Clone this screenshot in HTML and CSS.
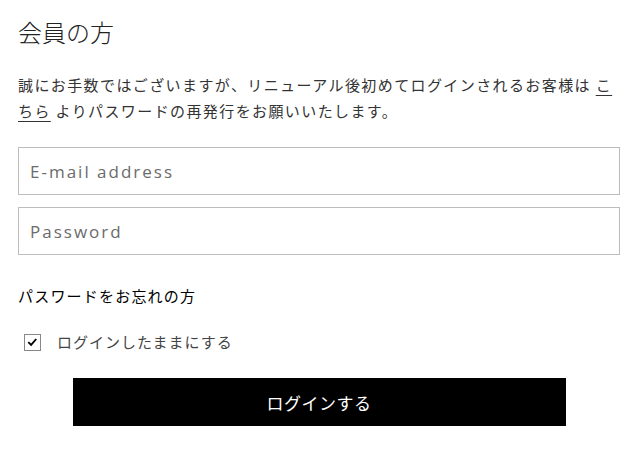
FILE: index.html
```html
<!DOCTYPE html>
<html lang="ja">
<head>
<meta charset="utf-8">
<link rel="stylesheet" href="styles.css">
</head>
<body>
<main class="page">
  <h1 class="title">会員の方</h1>
  <p class="notice">誠にお手数ではございますが、リニューアル後初めてログインされるお客様は <a href="#" class="link">こちら</a> よりパスワードの再発行をお願いいたします。</p>
  <form class="form">
    <input class="field" type="email" placeholder="E-mail address">
    <input class="field" type="password" placeholder="Password">
    <a href="#" class="forgot">パスワードをお忘れの方</a>
    <label class="remember">
      <span class="box"><svg viewBox="0 0 16 16" width="16" height="16"><path d="M3.5 8.2 L6.5 11 L12 4.8" fill="none" stroke="#000" stroke-width="2"/></svg></span>
      <span class="remember-text">ログインしたままにする</span>
    </label>
    <button class="submit" type="button">ログインする</button>
  </form>
</main>
</body>
</html>
```
FILE: styles.css
```css
html, body { margin: 0; padding: 0; background: #fff; }
body {
  font-family: "Noto Sans CJK JP", "Noto Sans", sans-serif;
  color: #333;
}
.page {
  padding: 14px 18px 0 18px;
}
.title {
  margin: 0;
  font-size: 24px;
  font-weight: 300;
  line-height: 36px;
  color: #222;
}
.notice {
  margin: 22px 0 0 0;
  font-size: 15px;
  line-height: 26px;
  letter-spacing: 1.4px;
  color: #333;
}
.link { color: #333; text-decoration: underline; text-underline-offset: 4px; }
.form {
  display: flex;
  flex-direction: column;
  margin-top: 23px;
}
.field {
  box-sizing: border-box;
  height: 48px;
  width: 100%;
  margin: 0 0 12px 0;
  border: 1.5px solid #bdbdbd;
  padding: 0 11px;
  font-family: "Open Sans", sans-serif;
  font-size: 17px;
  letter-spacing: 2px;
  color: #333;
  outline: none;
}
.field::placeholder { color: #6b6b6b; }
.forgot {
  margin-top: 18px;
  font-size: 15px;
  line-height: 22px;
  color: #000;
  text-decoration: none;
  letter-spacing: 1.2px;
}
.remember {
  display: flex;
  align-items: center;
  margin-top: 24px;
  padding-left: 6px;
  gap: 16px;
}
.box {
  box-sizing: border-box;
  width: 17px;
  height: 17px;
  border: 1px solid #888;
  display: flex;
  align-items: center;
  justify-content: center;
}
.box svg { display: block; }
.remember-text {
  font-size: 15px;
  line-height: 22px;
  color: #444;
  letter-spacing: 1px;
}
.submit {
  align-self: center;
  width: 493px;
  height: 48px;
  margin-top: 25px;
  background: #000;
  color: #fff;
  border: 0;
  font-family: "Noto Sans CJK JP", sans-serif;
  font-size: 17px;
  letter-spacing: 0.5px;
}
```
